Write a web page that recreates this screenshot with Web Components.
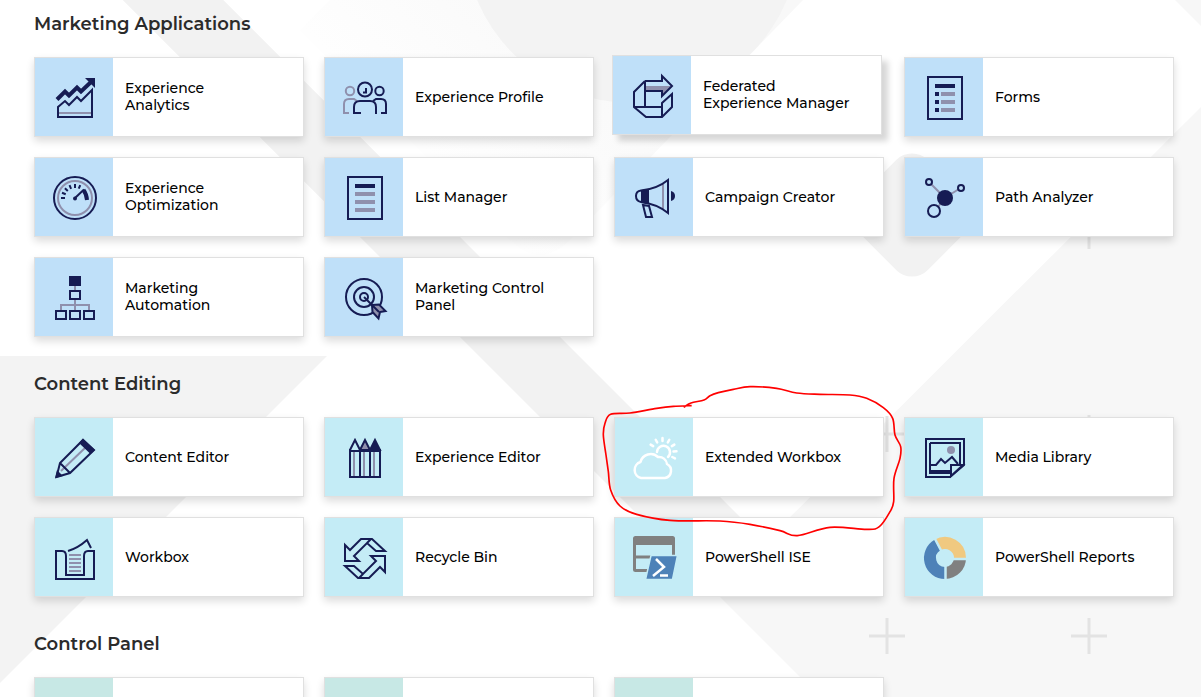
<!DOCTYPE html>
<html lang="en">
<head>
<meta charset="utf-8">
<title>Launchpad</title>
<style>
body{margin:0;background:#fff;font-family:Montserrat,Inter,"Open Sans",sans-serif;color:#000}
</style>
</head>
<body>
<launch-pad>
  <app-section heading="Marketing Applications" style="--tile:#bfe0f9">
    <app-card icon="analytics">Experience<br>Analytics</app-card>
    <app-card icon="profile">Experience Profile</app-card>
    <app-card icon="federated" raised>Federated<br>Experience Manager</app-card>
    <app-card icon="forms">Forms</app-card>
    <app-card icon="gauge">Experience<br>Optimization</app-card>
    <app-card icon="list">List Manager</app-card>
    <app-card icon="campaign">Campaign Creator</app-card>
    <app-card icon="path">Path Analyzer</app-card>
    <app-card icon="automation">Marketing<br>Automation</app-card>
    <app-card icon="target">Marketing Control<br>Panel</app-card>
  </app-section>
  <app-section heading="Content Editing" style="--tile:#c4ecf6">
    <app-card icon="pencil">Content Editor</app-card>
    <app-card icon="pencils">Experience Editor</app-card>
    <app-card icon="weather">Extended Workbox<ink-circle slot="mark"></ink-circle></app-card>
    <app-card icon="media">Media Library</app-card>
    <app-card icon="workbox">Workbox</app-card>
    <app-card icon="recycle">Recycle Bin</app-card>
    <app-card icon="ise">PowerShell ISE</app-card>
    <app-card icon="reports">PowerShell Reports</app-card>
  </app-section>
  <app-section heading="Control Panel" style="--tile:#c7e8e5">
    <app-card></app-card>
    <app-card></app-card>
    <app-card></app-card>
  </app-section>
</launch-pad>

<script>
const N = '#161c54', G = '#8f90ad';
const polar = (cx, cy, r, deg) => {
  const a = deg * Math.PI / 180;
  return (cx + r * Math.cos(a)).toFixed(2) + ' ' + (cy + r * Math.sin(a)).toFixed(2);
};
const rays = (cx, cy, r1, r2, angles) =>
  angles.map(a => 'M' + polar(cx, cy, r1, a) + 'L' + polar(cx, cy, r2, a)).join('');
const recycleArrow = 'M20 27V43H34L29 38L42 25L51 33H60L47 21H36L25 32ZM42 25L46 21';

/* Icons are drawn on the 78-unit tile; default is a 2-unit navy outline */
const ICONS = {
  analytics: `<path stroke="${G}" d="M24 55H56"/><path d="M23 59V49L30 43L34 47L42 39L46 43L57 32V59Z"/>
    <path stroke-width="4" d="M22 41.500L30 33.500L34 37.500L42 29.500L46 33.500L56 24"/><path fill="${N}" stroke="none" d="M50 20H60V30Z"/>`,
  profile: `<g stroke="${G}"><circle cx="25" cy="33" r="4.200"/><path d="M24 55H19V46Q19 41 24 41H29L32 43"/></g>
    <circle cx="54.500" cy="33" r="4.200"/><path d="M56 55H61V46Q61 41 56 41H51L48 43"/>
    <circle cx="40" cy="31.500" r="7"/><path d="M41 30V34.500H38"/><path d="M36 55H29V49Q29 43 35 43H45Q51 43 51 49V56"/>`,
  federated: `<path fill="${G}" stroke="none" d="M32 30H58L49 39V35H32Z"/>
    <path d="M32 25H49V20L59 30L49 40V35H32M32 25V51M32 25L21 36V51L33 61H49L59 51V38L49 47V61M21 51H49"/>`,
  list: `<path d="M23 19H57V61H23Z"/><path stroke-width="4" d="M30 28H50"/><path stroke-width="4" stroke="${G}" d="M30 36H50M30 44H50M30 52H50"/>`,
  forms: `<path d="M23 19H57V61H23Z"/><path stroke-width="4" d="M30 28H50M30 36H34M30 44H34M30 52H34"/>
    <path stroke-width="4" stroke="${G}" d="M36 36H50M36 44H50M36 52H50"/>`,
  gauge: `<circle cx="40" cy="40" r="21"/><circle cx="40" cy="40" r="17" stroke="${G}"/>
    <path d="${rays(40, 40, 10, 14, [180, 202, 224, 247, 270, 292])}"/>
    <circle cx="40" cy="40.500" r="2" fill="${N}" stroke="none"/><path stroke-width="2" d="M40 40L49 31.500"/>
    <path stroke-width="4" d="M48.500 32Q51.500 36 52 42"/>`,
  campaign: `<path stroke="${G}" d="M48 25V51"/><path fill="${N}" d="M27 33L33 32V45L27 44Z"/>
    <path d="M53 22V55Q42 46 26 44Q21 43 21 38Q21 33 26 32.500Q42 31 53 22Z"/>
    <path fill="${N}" stroke="none" d="M56 33Q60 34 60 38Q60 42 56 43Z"/><path d="M28 47L34 48L37 59H31Z"/>`,
  path: `<path stroke="${G}" d="M26 26L35 35M54 31L46 36M33 49L36 45"/><circle cx="40" cy="40" r="8" fill="${N}" stroke="none"/>
    <circle cx="24" cy="24" r="3"/><circle cx="56" cy="30" r="3"/><circle cx="29" cy="53" r="6"/>`,
  automation: `<path stroke="${G}" d="M40 28V32M40 42V52M26 52V47H54V52"/><path fill="${N}" stroke="none" d="M34 18H46V28H34Z"/>
    <path d="M35 33H45V41H35ZM21 53H31V61H21ZM35 53H45V61H35ZM49 53H59V61H49Z"/>`,
  target: `<circle cx="39" cy="39" r="18"/><circle cx="39" cy="39" r="10"/><circle cx="39" cy="39" r="4"/>
    <path fill="${G}" d="M47 47L54 46.500L60.500 53L55 54L53.500 60.500L47.500 54Z"/><path d="M39 39L54 54"/>`,
  pencil: `<path stroke="${G}" d="M26 53L51 29"/><path d="M48 22L59 32L35 55L21.500 59L25 45ZM25 45L35 55"/>
    <path fill="${N}" stroke="none" d="M48 20.500L60 32L55.500 36L44 25ZM20 60L22 52L28 58Z"/>`,
  pencils: `<path stroke="${G}" d="M29 34V58M39 34V58M49 34V58"/><path fill="${G}" d="M35 32L40 22L45 32Z"/>
    <path fill="${N}" d="M45 32L50 22L55 32Z"/><path d="M25 32L30 22L35 32M25 31V59H55V31M25 33H55M35 32V59M45 32V59"/>`,
  weather: `<g stroke="#fff" stroke-width="2.500" stroke-linecap="round" stroke-linejoin="round">
    <path d="M26 60A8.300 8.300 0 0 1 25.500 44A10.500 10.500 0 0 1 43 39A8 8 0 0 1 52 46A7.500 7.500 0 0 1 50 60Z"/>
    <path d="M42 34A6.500 6.500 0 1 1 53 39"/><path d="${rays(47.500, 34, 11, 14, [212, 241, 270, 299, 328, 357, 27])}"/></g>`,
  media: `<path d="M21 21H59V47L45 59H21Z"/><path d="M25 25H55V47M25 25V55H45"/><path stroke-width="4" d="M25 54H45"/>
    <path d="M25 47H31L36 41L40 45L47 39L53 46"/><path fill="var(--tile)" d="M46 58V47H58Z"/>
    <circle cx="46" cy="32" r="4" fill="${G}" stroke="none"/>`,
  workbox: `<path stroke="${G}" d="M34 37H46M34 41H46M34 45H46M34 49H46M34 53H46"/>
    <path d="M21 33H27Q31 33 31 38V57H49V38Q49 33 53 33H59V61H21ZM33 33Q43 30 52 22L56 30"/>`,
  recycle: `<path d="${recycleArrow}"/><path transform="rotate(180 40 40.500)" d="${recycleArrow}"/>`,
  ise: `<g stroke="#808080"><rect x="19.500" y="19.500" width="39" height="33" rx="1" stroke-width="3"/><path stroke-width="8" d="M19 23H59"/><path stroke-width="3" d="M20 39H58"/></g>
    <path fill="#4e82b8" stroke="var(--tile)" stroke-width="1.500" d="M36 37.500H62.500L57.500 61.500H30.500Z"/>
    <path stroke="#fff" stroke-width="2.500" d="M41 41L49 49L38 58M45 57.500H53"/>`,
  reports: `<g stroke-width="12"><path stroke="#808080" d="M55 40A15 15 0 0 1 40 55"/>
    <path stroke="#4e82b8" d="M40 55A15 15 0 0 1 32.500 27"/><path stroke="#f0c980" d="M32.500 27A15 15 0 0 1 55 40"/></g>
    <path stroke="var(--tile)" stroke-width="2.500" d="M40 40L29 19M40 41H63M40.500 40V63"/>`
};

customElements.define('app-card', class extends HTMLElement {
  constructor() {
    super();
    this.attachShadow({ mode: 'open' }).innerHTML = `
      <style>
        :host{display:block;position:relative}
        a{display:flex;align-items:center;box-sizing:border-box;min-height:80px;border:1px solid #e0e0e0;background:#fff;
          box-shadow:0 4px 8px rgba(0,0,0,.14);color:#000;text-decoration:none;font-size:14px;font-weight:500;line-height:17px}
        :host([raised]) a{transform:translate(-2px,-2px);box-shadow:6px 6px 6px rgba(0,0,0,.16)}
        .tile{flex:none;width:78px;height:78px;background:var(--tile)}
        svg{display:block;width:78px;height:78px;fill:none;stroke:${N};stroke-width:2}
        .label{padding:0 12px}
      </style>
      <a href="#"><span class="tile"><svg viewBox="0 0 78 78" aria-hidden="true">${ICONS[this.getAttribute('icon')] || ''}</svg></span>
      <span class="label"><slot></slot></span></a><slot name="mark"></slot>`;
  }
});

customElements.define('app-section', class extends HTMLElement {
  constructor() {
    super();
    this.attachShadow({ mode: 'open' }).innerHTML = `
      <style>
        :host{display:block}
        h2{margin:0 0 21px;font-size:18px;line-height:24px;font-weight:600;color:#2b2b2b}
        .grid{display:grid;grid-template-columns:repeat(4,minmax(0,1fr));gap:20px}
      </style>
      <h2>${this.getAttribute('heading')}</h2>
      <div class="grid"><slot></slot></div>`;
  }
});

/* Hand-drawn marker line laid over a card */
customElements.define('ink-circle', class extends HTMLElement {
  constructor() {
    super();
    const p = [[281,97],[303,84],[342,75],[360,62],[385,53],[430,43],[480,35],[560,40],[620,54],[690,58],[780,60],[830,70],[880,98],[908,130],[915,180],[932,215],[930,250],[912,310],[911,380],[900,410],[868,455],[830,463],[720,457],[622,482],[570,467],[480,448],[390,438],[240,436],[140,418],[90,393],[62,345],[55,290],[48,240],[40,180],[45,145],[62,118],[120,114],[200,100],[250,94],[305,92]];
    let d = 'M' + p[0];
    for (let i = 0; i < p.length - 1; i++) {
      const a = p[i - 1] || p[i], b = p[i], c = p[i + 1], e = p[i + 2] || c;
      d += `C${b[0] + (c[0] - a[0]) / 6} ${b[1] + (c[1] - a[1]) / 6} ${c[0] - (e[0] - b[0]) / 6} ${c[1] - (e[1] - b[1]) / 6} ${c}`;
    }
    this.attachShadow({ mode: 'open' }).innerHTML = `
      <style>
        :host{position:absolute;z-index:2;left:-24px;top:-42px;width:320px;height:180px;pointer-events:none}
        svg{display:block;width:100%;height:100%;fill:none;stroke:#f00;stroke-width:5;stroke-linejoin:round}
      </style>
      <svg viewBox="0 0 960 540" aria-hidden="true"><path d="${d}"/></svg>`;
  }
});

customElements.define('page-backdrop', class extends HTMLElement {
  constructor() {
    super();
    this.attachShadow({ mode: 'open' }).innerHTML = `
      <style>
        :host{position:absolute;inset:0;z-index:-1;overflow:hidden}
        svg{display:block;width:100%;height:100%}
      </style>
      <svg viewBox="0 0 1201 697" preserveAspectRatio="xMinYMin slice" aria-hidden="true">
        <defs><linearGradient id="fade" gradientUnits="userSpaceOnUse" x1="460" y1="240" x2="650" y2="50">
          <stop offset="0" stop-color="#fff"/><stop offset="1" stop-color="#f8f8f8"/></linearGradient></defs>
        <path fill="#f7f7f7" d="M1201 107L715 592L820 697H1201ZM1175 0H1201V26Z"/>
        <path fill="#f2f2f2" d="M123 0H223L765 542L715 592Z"/>
        <path fill="url(#fade)" d="M330 0L300 30L510 240Q540 270 570 240L803 0Z"/>
        <path fill="#f2f2f2" d="M223 0H123L360 237H460Z"/>
        <circle cx="632" cy="-65" r="168" fill="#f3f3f3"/>
        <rect x="862" y="165" width="100" height="100" rx="22" transform="rotate(45 912 215)" fill="#f2f2f2"/>
        <path fill="#f3f3f3" d="M0 356H327L0 683Z"/>
        <path stroke="#e3e3e3" stroke-width="3" d="M1071 636H1107M1089 618V654M869 636H905M887 618V654M869 434H905M887 416V452M1071 434H1107M1089 415V452M1071 231H1107M1089 213V249"/>
      </svg>`;
  }
});

customElements.define('launch-pad', class extends HTMLElement {
  constructor() {
    super();
    this.attachShadow({ mode: 'open' }).innerHTML = `
      <style>
        :host{display:block;position:relative;z-index:0;height:100vh;overflow:hidden}
        main{display:flex;flex-direction:column;gap:35px;padding:12px 27px 34px 34px}
      </style>
      <page-backdrop></page-backdrop>
      <main><slot></slot></main>`;
  }
});
</script>
</body>
</html>
